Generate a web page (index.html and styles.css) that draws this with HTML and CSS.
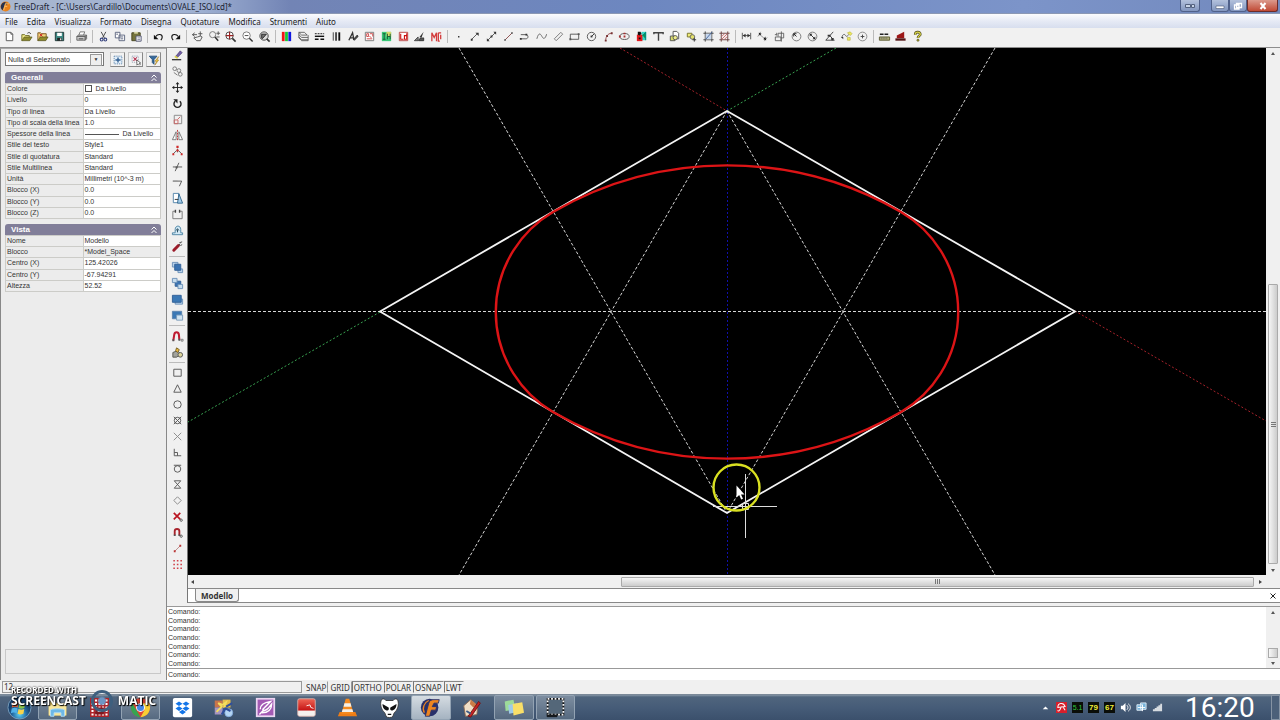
FILE: index.html
```html
<!DOCTYPE html>
<html lang="it">
<head>
    <meta charset="utf-8">
    <title>FreeDraft - OVALE_ISO.lcd</title>
    <link rel="stylesheet" href="styles.css">
</head>
<body>
    <header class="titlebar">
        <svg class="app-icon" viewBox="0 0 12 12"><circle cx="6" cy="6" r="5.5" fill="#e8821c"/><path d="M5 1a5 5 0 0 0-2 9l2-5 4-2z" fill="#25314f"/><path d="M4 10l2-7h4M5 6h3" stroke="#f6b45c" fill="none" stroke-width="1.3"/></svg>
        <h1>FreeDraft - [C:\Users\Cardillo\Documents\OVALE_ISO.lcd]*</h1>
        <div class="window-buttons">
            <button class="win extra" aria-label="Monitor"><svg viewBox="0 0 14 8"><path d="M2.5 2.500h5v3h-5zM8.500 2.500h3v3h-3z" fill="#c8d4e6" stroke="#53617e"/></svg></button>
            <div class="win-group">
                <button class="win" aria-label="Riduci"><svg viewBox="0 0 14 8"><path d="M3 4h8v2.500h-8z" fill="#fff" stroke="#4a5775" stroke-width=".6"/></svg></button>
                <button class="win" aria-label="Ripristina"><svg viewBox="0 0 14 8"><path d="M5.500 1.500h5v4h-5zM3.500 3h4.500v4h-4.500z" fill="#8fa0c0" stroke="#fff" stroke-width="1.3"/></svg></button>
                <button class="win close" aria-label="Chiudi"><svg viewBox="0 0 14 8"><path d="M4.500 1l5 6M9.500 1l-5 6" stroke="#fff" stroke-width="2"/></svg></button>
            </div>
        </div>
    </header>

    <nav class="menu">
        <a href="#">File</a><a href="#">Edita</a><a href="#">Visualizza</a><a href="#">Formato</a><a href="#">Disegna</a><a href="#">Quotature</a><a href="#">Modifica</a><a href="#">Strumenti</a><a href="#">Aiuto</a>
    </nav>

    <div class="toolbar">
        <div class="group n4">
            <button aria-label="Nuovo"><svg viewBox="0 0 14 14"><path d="M3.500 2.500h5l2 2v7h-7zM8.500 2.500v2h2" fill="#fff" stroke="#555"/></svg></button>
            <button aria-label="Apri"><svg viewBox="0 0 14 14"><path d="M2 11.500V5h3l1 1h4v1.500" fill="#f5ee8c" stroke="#6d6b22"/><path d="M2 11.500l2.500-4H13l-2.500 4z" fill="#8f8c2c" stroke="#55531a" stroke-width=".7"/><path d="M8 3.500c2-1.500 3-.5 3.500.8" fill="none" stroke="#333"/></svg></button>
            <button aria-label="Importa"><svg viewBox="0 0 14 14"><path d="M2 11.500V3h3l1 1h5v4" fill="#f3d27c" stroke="#7b5a22"/><path d="M4 4l3 3M7 4L4 7" stroke="#c22"/><path d="M2 11.500l2.500-4H13l-2.500 4z" fill="#8f8c2c" stroke="#4c4917" stroke-width=".7"/></svg></button>
            <button aria-label="Salva"><svg viewBox="0 0 14 14"><path d="M2.500 2.500h9v9h-9z" fill="#3d8a84" stroke="#1e3434"/><path d="M4.500 3h5v3.500h-5z" fill="#fff"/><path d="M4.500 8.500h5v3h-5z" fill="#222"/><path d="M7.500 9h1.500v2h-1.500z" fill="#ddd"/></svg></button>
        </div>
        <div class="group n1">
            <button aria-label="Stampa"><svg viewBox="0 0 14 14"><path d="M4 6l1.500-4h5L9 6" fill="#fff" stroke="#777"/><path d="M2 7l1.500-1.500h9L11 7zM2 7h9v4H2zM11 7l1.500-1.500v4L11 11z" fill="#ccc" stroke="#666"/><path d="M4 9.500h5" stroke="#444"/></svg></button>
        </div>
        <div class="group n3">
            <button aria-label="Taglia"><svg viewBox="0 0 14 14"><path d="M4.500 2l3.500 6.500M9.500 2L6 8.500" stroke="#444" fill="none"/><g fill="none" stroke="#39457f" stroke-width="1.2"><circle cx="5" cy="10.300" r="1.500"/><circle cx="9" cy="10.300" r="1.500"/></g></svg></button>
            <button aria-label="Copia"><svg viewBox="0 0 14 14"><path d="M2.500 2.500h5v6h-5zM6.500 5.500h6v6h-6z" fill="#fff" stroke="#5c647d"/><path d="M3.500 4.500h2M8 7.500h3M8 9.500h3" stroke="#5c647d"/></svg></button>
            <button aria-label="Incolla"><svg viewBox="0 0 14 14"><path d="M2 3h9v8.500H2z" fill="#76753c" stroke="#45441f"/><path d="M4.500 2h4v2h-4z" fill="#d8d7a5"/><path d="M6.500 6.500h5.500v5.500H6.500z" fill="#fff" stroke="#555a77"/><path d="M8 8.500h3M8 10.300h3" stroke="#555a77" stroke-width=".7"/></svg></button>
        </div>
        <div class="group n2">
            <button aria-label="Annulla"><svg viewBox="0 0 14 14"><path d="M4 7C6 4 11 4 11 7.500c0 1.500-.7 2.500-1.500 3.500" fill="none" stroke="#111" stroke-width="1.2"/><path d="M2 5v5h5z" fill="#111"/></svg></button>
            <button aria-label="Ripeti"><svg viewBox="0 0 14 14"><path d="M10 7C8 4 3 4 3 7.500c0 1.500.7 2.500 1.500 3.500" fill="none" stroke="#111" stroke-width="1.2"/><path d="M12 5v5H7z" fill="#111"/></svg></button>
        </div>
        <div class="group n5">
            <button aria-label="Panoramica"><svg viewBox="0 0 14 14"><path d="M1.500 5h5M4 3l-2.500 2L4 7M3 8.500l3 3h4l2-4-2-1-3 1zM10 1.500v5M7.800 4h4.500" fill="none" stroke="#555"/></svg></button>
            <button aria-label="Zoom"><svg viewBox="0 0 14 14"><circle cx="5" cy="5" r="3.300" fill="none" stroke="#777"/><path d="M7.500 7.500l3.500 4" stroke="#333" stroke-width="1.6"/><path d="M11 1.500v4M9 3.500h4M9 7.500h3.500" stroke="#555"/></svg></button>
            <button aria-label="Zoom avanti"><svg viewBox="0 0 14 14"><circle cx="6" cy="6" r="4" fill="#fff" stroke="#444"/><path d="M9 9l3.500 3.500" stroke="#333" stroke-width="1.7"/><path d="M2 6h8M6 2v8" stroke="#922" stroke-width="1.2"/></svg></button>
            <button aria-label="Zoom indietro"><svg viewBox="0 0 14 14"><circle cx="6" cy="6" r="4" fill="#fff" stroke="#777"/><path d="M9 9l3.500 3.500" stroke="#333" stroke-width="1.5"/><path d="M4 6h4" stroke="#444"/></svg></button>
            <button aria-label="Zoom estensione"><svg viewBox="0 0 14 14"><circle cx="6.500" cy="6.500" r="4.500" fill="#ddd" stroke="#444"/><path d="M9.500 9.500l3 3" stroke="#333" stroke-width="1.7"/><path d="M4 9V4.500h5L4.500 9.500" fill="#777" stroke="#222"/></svg></button>
        </div>
        <div class="group n10">
            <button aria-label="Colore"><svg viewBox="0 0 14 14"><path d="M2 2h3v10H2z" fill="#f01515"/><path d="M5.500 2h3v10h-3z" fill="#13c935"/><path d="M9 2h3v10H9z" fill="#1018e0"/></svg></button>
            <button aria-label="Livelli"><svg viewBox="0 0 14 14"><path d="M2 2.500h6l3 3H5zM2 5l3 3h7M2 7.500l3 3h7M2 2.500v6l3 3h7v-6" fill="none" stroke="#555" stroke-width=".9"/></svg></button>
            <button aria-label="Tipo di linea"><svg viewBox="0 0 14 14"><path d="M2 4h10" stroke="#111" stroke-dasharray="2 1"/><path d="M2 6.800h10" stroke="#111" stroke-width="1.5"/><path d="M2 10h10" stroke="#111" stroke-width="1.6" stroke-dasharray="4 2"/></svg></button>
            <button aria-label="Spessore"><svg viewBox="0 0 14 14"><path d="M3.500 2.500v9" stroke="#111" stroke-width=".8"/><path d="M6.500 2.500v9" stroke="#111" stroke-width="1.5"/><path d="M10 2.500v9" stroke="#111" stroke-width="2"/></svg></button>
            <button aria-label="Stile testo"><svg viewBox="0 0 14 14"><path d="M2 11l4-8 1.500 8M3.500 8.500h4" fill="none" stroke="#333" stroke-width="1.4"/><path d="M7 10l4-4.500 1 1.500-4 4z" fill="#555" stroke="#111" stroke-width=".7"/></svg></button>
            <button aria-label="Stile quote"><svg viewBox="0 0 14 14"><path d="M2.500 2.500h9v9h-9z" fill="#fff" stroke="#777"/><path d="M4 4h2v3H4zM7.500 4h3v3M4 9.500h6M7 6.500l2 2" fill="none" stroke="#cf4545"/></svg></button>
            <button aria-label="Stile punto"><svg viewBox="0 0 14 14"><path d="M2 2h10v10H2z" fill="#39c878"/><path d="M7 2h5v5H7z" fill="#d9dc6d"/><path d="M3 4h3M4.500 4v6M3 10h3M8 4v6M11 4v6M8 7h3" fill="none" stroke="#185a35"/></svg></button>
            <button aria-label="Layout"><svg viewBox="0 0 14 14"><path d="M2.500 2.500h9v9h-9z" fill="#fff" stroke="#b44"/><path d="M4 4v6h3M8 6h2.500v4H8zM10.500 3.500v3" fill="none" stroke="#c11" stroke-width="1.2"/></svg></button>
            <button aria-label="Pennello"><svg viewBox="0 0 14 14"><path d="M1.500 11.500l4-4v4z" fill="#888" stroke="#444"/><path d="M11.500 2L7 7.500l2 1z" fill="#333"/><path d="M6 11.500h5.500v-3l-4 .5z" fill="#555" stroke="#333"/></svg></button>
            <button aria-label="Multilinea"><svg viewBox="0 0 14 14"><path d="M2 12V3l2.500 5L7 3v9M9 3v9h1.500M9 3h3M11.500 5v5" fill="none" stroke="#d33d3d" stroke-width="1.4"/></svg></button>
        </div>
        <div class="group n17">
            <button aria-label="Punto"><svg viewBox="0 0 14 14"><path d="M6.500 6.500h1.500v1.500h-1.500z" fill="#333"/></svg></button>
            <button aria-label="Raggio"><svg viewBox="0 0 14 14"><path d="M4 10l6-6" stroke="#555"/><path d="M3 9.500h2v2H3zM8 3h3.500v3.500z" fill="#333"/></svg></button>
            <button aria-label="Retta"><svg viewBox="0 0 14 14"><path d="M3 11l8-8" stroke="#555"/><path d="M2 9v3h3zM9 2h3v3zM6 6h2v2H6z" fill="#333"/></svg></button>
            <button aria-label="Linea"><svg viewBox="0 0 14 14"><path d="M3.500 10.500l7-7" stroke="#8b4b4b"/><path d="M2.500 10h1.500v1.500H2.500zM10 2.500h1.500v1.500H10z" fill="#333"/></svg></button>
            <button aria-label="Polilinea"><svg viewBox="0 0 14 14"><path d="M3 5h5.500c3 0 3 4.500 0 4.500H3" fill="none" stroke="#555"/><path d="M2 8.500h2v2H2zM8 4h2v2H8z" fill="#333"/></svg></button>
            <button aria-label="Spline"><svg viewBox="0 0 14 14"><path d="M2 9.500C4 2 6 4 7.500 7s3.500 3 5-2.500" fill="none" stroke="#666"/></svg></button>
            <button aria-label="Doppia linea"><svg viewBox="0 0 14 14"><path d="M2.500 9.500l7-7 2 2-7 7z" fill="none" stroke="#777"/></svg></button>
            <button aria-label="Rettangolo"><svg viewBox="0 0 14 14"><path d="M2.500 4.500h9v5.500h-9z" fill="none" stroke="#555"/><path d="M1.500 9h2v2h-2zM10.500 3.500h2v2h-2z" fill="#555"/></svg></button>
            <button aria-label="Cerchio"><svg viewBox="0 0 14 14"><circle cx="7" cy="7" r="4.500" fill="none" stroke="#555"/><path d="M7 7l3-3" stroke="#333"/><path d="M6 6h2v2H6z" fill="#333"/></svg></button>
            <button aria-label="Arco"><svg viewBox="0 0 14 14"><path d="M4 11.500C4 7 6 4 10 3.500" fill="none" stroke="#974c4c"/><path d="M3 10.500h2v2H3zM9.500 2.500h2v2h-2zM4.500 5.500h2v2h-2z" fill="#733"/></svg></button>
            <button aria-label="Ellisse"><svg viewBox="0 0 14 14"><ellipse cx="7" cy="7" rx="5" ry="3.200" fill="none" stroke="#555"/><path d="M6 6h2v2H6zM1 6h2v2H1zM6 3h2v1.500H6z" fill="#a33"/></svg></button>
            <button aria-label="Immagine"><svg viewBox="0 0 14 14"><path d="M7 2h5v9H7z" fill="#35d5c4"/><path d="M2 5h6v7H2z" fill="#e3191c"/><path d="M3 2h3l1 2-2 2-2-1zM4 8h2v2H4z" fill="#111"/><path d="M11.500 2v9M8 6l3-3v6" stroke="#087" fill="#0b9a55"/></svg></button>
            <button aria-label="Testo"><svg viewBox="0 0 14 14"><path d="M2 4.500V3h10v1.500M7 3v8.500" fill="none" stroke="#444" stroke-width="1.500"/></svg></button>
            <button aria-label="Blocco"><svg viewBox="0 0 14 14"><path d="M5.500 1.500h4l2 2v6h-6z" fill="#fff" stroke="#555"/><path d="M2.500 6.500h5v5h-5z" fill="#d8dc6b" stroke="#555"/><circle cx="7.800" cy="8.300" r="2.300" fill="#f0ed8a" stroke="#555"/></svg></button>
            <button aria-label="Inserisci blocco"><svg viewBox="0 0 14 14"><path d="M2.500 3.500h5v4h-5z" fill="#f0ed77" stroke="#77732c"/><circle cx="8" cy="7.500" r="2.500" fill="#e5e16b" stroke="#666"/><path d="M8 10.500h4M10 8.500v4" stroke="#333"/></svg></button>
            <button aria-label="Regione"><svg viewBox="0 0 14 14"><path d="M3.500 1.500v11M1.500 3.500h11M10.500 1.500v11M1.500 10.500h11" stroke="#444"/><path d="M4 4h6v6H4z" fill="#c8d8ee"/><path d="M4 10l7-8" stroke="#44649a"/></svg></button>
            <button aria-label="Tratteggio"><svg viewBox="0 0 14 14"><path d="M3.500 1.500v11M1.500 3.500h11M10.500 1.500v11M1.500 10.500h11" stroke="#6a4040"/><path d="M4 7l3-3M4 10l6-6M7 10l3-3" stroke="#c66"/></svg></button>
        </div>
        <div class="group n8">
            <button aria-label="Quota lineare"><svg viewBox="0 0 14 14"><path d="M2.500 3v7M11.500 3v7M3 6h8" stroke="#555"/><path d="M3 6l3-2v4zM11 6L8 4v4z" fill="#333"/></svg></button>
            <button aria-label="Quota allineata"><svg viewBox="0 0 14 14"><path d="M3 4l7 6M2 7l3-5M9 12l3-4" stroke="#777" stroke-width=".8"/><path d="M3 3l3 1-2 2zM11 11l-3-1 2-3z" fill="#111"/></svg></button>
            <button aria-label="Quota ordinata"><svg viewBox="0 0 14 14"><path d="M2.500 7.500h6v4h-6zM5.500 7V3.500h6v5H9M2 5h2M4 3v3M9 1.500v11" fill="none" stroke="#555" stroke-width=".9"/></svg></button>
            <button aria-label="Raggio quota"><svg viewBox="0 0 14 14"><circle cx="7" cy="7" r="4.700" fill="none" stroke="#777"/><path d="M7 7L4 4M4 4v3M4 4h3" stroke="#222"/></svg></button>
            <button aria-label="Diametro"><svg viewBox="0 0 14 14"><circle cx="7" cy="7" r="4.700" fill="none" stroke="#777"/><path d="M4 4l6 6" stroke="#333"/><path d="M4 4h3L4 7zM10 10H7l3-3z" fill="#222"/></svg></button>
            <button aria-label="Quota angolare"><svg viewBox="0 0 14 14"><path d="M11 2L3 11h9.500" fill="none" stroke="#444"/><path d="M6 6c2 0 4 2 4 5" fill="none" stroke="#333"/><path d="M5 5h3v2H5zM9 8.500h2.500V11H9z" fill="#333"/></svg></button>
            <button aria-label="Direttrice"><svg viewBox="0 0 14 14"><path d="M2 8c1-4 3-4 4-2s3 0 4-2" fill="none" stroke="#666"/><path d="M1 7.500h2.500V10z" fill="#333"/><path d="M8 3l3-1 2 2-2 2zM8 8h3v3H8z" fill="#ece95c" stroke="#b1a935" stroke-width=".6"/></svg></button>
            <button aria-label="Centro"><svg viewBox="0 0 14 14"><circle cx="7" cy="7" r="4.700" fill="none" stroke="#888"/><path d="M5 7h4M7 5v4" stroke="#444"/></svg></button>
        </div>
        <div class="group n3">
            <button aria-label="Distanza"><svg viewBox="0 0 14 14"><path d="M2 4.500h10" stroke="#222" stroke-width="1.5" stroke-dasharray="4 1"/><path d="M1.500 7.500h11v3.500h-11z" fill="#b2b17b" stroke="#5c5b33"/><path d="M3.500 8v2M5.500 8v2M7.500 8v2M9.500 8v2" stroke="#555" stroke-width=".7"/></svg></button>
            <button aria-label="Area"><svg viewBox="0 0 14 14"><path d="M3 9V6l8-4v7z" fill="#9c1717"/><path d="M1.500 9h11v2.500h-11z" fill="#551616"/></svg></button>
            <button aria-label="Aiuto"><svg viewBox="0 0 14 14"><path d="M4.500 5c0-3.500 5.500-3.500 5.500-.5C10 6.500 7.500 6 7.500 8.500" fill="none" stroke="#4a4718" stroke-width="2.8"/><path d="M4.500 5c0-3.500 5.500-3.500 5.500-.5C10 6.500 7.500 6 7.500 8.500" fill="none" stroke="#d8d34b" stroke-width="1.4"/><circle cx="7.500" cy="11" r="1.200" fill="#a9a331" stroke="#4a4718" stroke-width=".6"/></svg></button>
        </div>
    </div>

    <main class="workspace">
        <aside class="properties">
            <div class="picker">
                <div class="select-box">
                    <select aria-label="Selezione"><option>Nulla di Selezionato</option></select>
                </div>
                <button aria-label="Seleziona tutto"><svg viewBox="0 0 14 14"><path d="M2.500 2.500h9v9h-9z" fill="#e3effa" stroke="#5680a8" stroke-dasharray="1.5 1"/><path d="M7 4v6M4 7h6" stroke="#315f91" stroke-width="1.6"/></svg></button>
                <button aria-label="Deseleziona"><svg viewBox="0 0 14 14"><path d="M2.500 2.500h7v7h-7z" fill="#fff" stroke="#8a95a8" stroke-dasharray="1.5 1"/><path d="M4 4l4 4M8 4L4 8" stroke="#b33653" stroke-width="1.3"/><path d="M8 7v6l1.500-1.500L11 13l1-1-1.200-1.500H12.500z" fill="#fff" stroke="#444" stroke-width=".8"/></svg></button>
                <button aria-label="Filtro"><svg viewBox="0 0 14 14"><path d="M1.500 2.500h9L7 6.500V12L5 10V6.500z" fill="#346a9e" stroke="#264e78"/><path d="M12.500 3L8 8.500h2L8 13l4.500-6h-2z" fill="#f6cb3d" stroke="#9b7622" stroke-width=".6"/></svg></button>
            </div>

            <section class="panel">
                <h2>Generali <svg viewBox="0 0 8 8"><path d="M1.500 3.500L4 1l2.500 2.500M1.500 7L4 4.500 6.500 7" fill="none" stroke="#fff"/></svg></h2>
                <table class="general">
                    <tr><th>Colore</th><td><span class="swatch"></span>Da Livello</td></tr>
                    <tr><th>Livello</th><td>0</td></tr>
                    <tr><th>Tipo di linea</th><td>Da Livello</td></tr>
                    <tr><th>Tipo di scala della linea</th><td>1.0</td></tr>
                    <tr><th>Spessore della linea</th><td><span class="line-sample"></span>Da Livello</td></tr>
                    <tr><th>Stile del testo</th><td>Style1</td></tr>
                    <tr><th>Stile di quotatura</th><td>Standard</td></tr>
                    <tr><th>Stile Multilinea</th><td>Standard</td></tr>
                    <tr><th>Unità</th><td>Millimetri (10^-3 m)</td></tr>
                    <tr><th>Blocco (X)</th><td>0.0</td></tr>
                    <tr><th>Blocco (Y)</th><td>0.0</td></tr>
                    <tr><th>Blocco (Z)</th><td>0.0</td></tr>
                </table>
            </section>

            <section class="panel">
                <h2>Vista <svg viewBox="0 0 8 8"><path d="M1.500 3.500L4 1l2.500 2.500M1.500 7L4 4.500 6.500 7" fill="none" stroke="#fff"/></svg></h2>
                <table class="view">
                    <tr><th>Nome</th><td>Modello</td></tr>
                    <tr><th>Blocco</th><td class="locked">*Model_Space</td></tr>
                    <tr><th>Centro (X)</th><td>125.42026</td></tr>
                    <tr><th>Centro (Y)</th><td>-67.94291</td></tr>
                    <tr><th>Altezza</th><td>52.52</td></tr>
                </table>
            </section>
            <div class="hint"></div>
        </aside>

        <div class="editor">
            <div class="upper">
                <div class="side-tools">
                    <div class="vgroup edit">
                        <button aria-label="Cancella"><svg viewBox="0 0 14 14"><path d="M5 8l5-6 2 2-5 5z" fill="#7460a8" stroke="#3f3567" stroke-width=".7"/><path d="M3.500 8.500L5 7l3 2.500-1.500 1z" fill="#d9d04f"/><path d="M1 11.500h10" stroke="#333" stroke-width="1.4"/></svg></button>
                        <button aria-label="Copia oggetti"><svg viewBox="0 0 14 14"><g fill="none" stroke="#777"><circle cx="4" cy="4" r="2"/><circle cx="8.500" cy="6" r="2"/><circle cx="10" cy="10" r="2"/><path d="M3 8l4 3"/></g></svg></button>
                        <button aria-label="Sposta"><svg viewBox="0 0 14 14"><path d="M7 3v8M3 7h8" stroke="#222"/><path d="M7 1l2 2.500H5zM7 13l2-2.500H5zM1 7l2.500-2v4zM13 7l-2.500-2v4z" fill="#222"/></svg></button>
                        <button aria-label="Ruota"><svg viewBox="0 0 14 14"><path d="M4.500 4.500a3.800 3.800 0 1 0 5 0" fill="none" stroke="#222" stroke-width="1.5"/><path d="M2.500 2.500h4.500V7z" fill="#222"/></svg></button>
                        <button aria-label="Scala"><svg viewBox="0 0 14 14"><path d="M3.500 2.500h8v9h-8z" fill="none" stroke="#888"/><path d="M3.500 7.500h4v4h-4zM7 7l3-3" fill="none" stroke="#c66"/></svg></button>
                        <button aria-label="Specchio"><svg viewBox="0 0 14 14"><path d="M5.500 3v8.500h-4zM8.500 3v8.500h4z" fill="#fff" stroke="#777"/><path d="M7 1v12" stroke="#b33" stroke-dasharray="2 1"/></svg></button>
                        <button aria-label="Esplodi"><svg viewBox="0 0 14 14"><path d="M6 7l-4 4M8 7l4 4M7 5v4" stroke="#555" fill="none"/><path d="M5.800 2h2.400v2.400H5.800zM5.800 6h2.400v2H5.800zM1.500 10h2v2h-2zM10.500 10h2v2h-2z" fill="#d22b2b"/></svg></button>
                        <button aria-label="Taglia linea"><svg viewBox="0 0 14 14"><path d="M2 7.500h10M4.500 12l4-9" stroke="#555" fill="none"/><path d="M5 7h2v2H5z" fill="#555"/></svg></button>
                        <button aria-label="Estendi"><svg viewBox="0 0 14 14"><path d="M2 5.500h9.500L9 11" fill="none" stroke="#555"/><path d="M2 5.500h5" stroke="#999"/></svg></button>
                        <button aria-label="Stira"><svg viewBox="0 0 14 14"><path d="M2.500 1.500h6v10h-6z" fill="#fff" stroke="#5384aa"/><path d="M8.500 2l4 10H7z" fill="#a4cdea" stroke="#33688f"/><path d="M4 8h4" stroke="#333"/></svg></button>
                        <button aria-label="Spezza"><svg viewBox="0 0 14 14"><path d="M4.500 3.500H2v8h10v-8H9.500" fill="none" stroke="#777"/><path d="M4 2h1.500v3H4zM8.500 2H10v3H8.500z" fill="#444"/></svg></button>
                        <button aria-label="Offset"><svg viewBox="0 0 14 14"><path d="M1.500 9.500h3V6c0-5 6-5 6 0v3.500h2v2h-11z" fill="#d2e9f6" stroke="#4f86a5"/><path d="M7 9V6M5.500 7L7 5l1.500 2" fill="none" stroke="#245"/></svg></button>
                        <button aria-label="Pennello proprietà"><svg viewBox="0 0 14 14"><path d="M3 11l5-5" stroke="#9d1c2b" stroke-width="3.2" stroke-linecap="round"/><path d="M8 6l2-2M9 3l3-1M10 6l2-1" stroke="#444"/></svg></button>
                    </div>
                    <div class="vgroup order">
                        <button aria-label="Primo piano"><svg viewBox="0 0 14 14"><path d="M1.500 1.500h6v5h-6zM7.500 8.500h5v4h-5z" fill="#b9d2ea" stroke="#6c91b8"/><path d="M4 3.500h6.500V10H4z" fill="#3b73b2" stroke="#315f96"/></svg></button>
                        <button aria-label="Sfondo"><svg viewBox="0 0 14 14"><path d="M4.500 4.500h6V10h-6z" fill="#3b73b2" stroke="#315f96"/><path d="M1.500 1.500h5v4.500h-5zM7.500 8h5v4.500h-5z" fill="#c6dced" stroke="#6c91b8"/></svg></button>
                        <button aria-label="Sopra oggetto"><svg viewBox="0 0 14 14"><path d="M4.500 6.500h8v5.500h-8z" fill="#b9d2ea" stroke="#6c91b8"/><path d="M1.500 2.500h9.500v7.500h-9.500z" fill="#3b78b5" stroke="#315f96"/></svg></button>
                        <button aria-label="Sotto oggetto"><svg viewBox="0 0 14 14"><path d="M1.500 2.500h10v8h-10z" fill="#3b78b5" stroke="#5b83ad"/><path d="M6 6.500h6.500v5.500H6z" fill="#d2e4f1" stroke="#799bba"/></svg></button>
                    </div>
                    <div class="vgroup magnet">
                        <button aria-label="Snap"><svg viewBox="0 0 14 14"><path d="M2.500 11.500L3.500 5c.5-3.500 4.500-3.500 5 0l.5 5.500" fill="none" stroke="#bf1b32" stroke-width="2.2"/><path d="M1.500 11h2M8 10.500h2" stroke="#555" stroke-width="2"/><path d="M11 10h2v2h-2z" fill="none" stroke="#555" stroke-width=".7"/></svg></button>
                        <button aria-label="Opzioni snap"><svg viewBox="0 0 14 14"><path d="M2 7l5-2 4 4-5 3H2z" fill="#a2a39c" stroke="#55564f"/><path d="M6 2l3 2-2 3-2-2z" fill="#e8b641" stroke="#776021"/><circle cx="10" cy="9.500" r="2.500" fill="#ddd599" stroke="#555"/></svg></button>
                    </div>
                    <div class="vgroup snaps">
                        <button aria-label="Fine"><svg viewBox="0 0 14 14"><path d="M3 3.500h8v7.500H3z"/></svg></button>
                        <button aria-label="Medio"><svg viewBox="0 0 14 14"><path d="M7 3l4 8H3z"/></svg></button>
                        <button aria-label="Centro snap"><svg viewBox="0 0 14 14"><circle cx="7" cy="7" r="4"/></svg></button>
                        <button aria-label="Nodo"><svg viewBox="0 0 14 14"><circle cx="7" cy="7" r="3.500"/><path d="M3 3l8 8M11 3l-8 8"/></svg></button>
                        <button aria-label="Intersezione"><svg viewBox="0 0 14 14"><path d="M3 3l8 8M11 3l-8 8" stroke="#888"/></svg></button>
                        <button aria-label="Perpendicolare"><svg viewBox="0 0 14 14"><path d="M3.500 3v7.500H11M3.500 7H7v3.500"/></svg></button>
                        <button aria-label="Tangente"><svg viewBox="0 0 14 14"><circle cx="7" cy="7.500" r="3.500"/><path d="M3 3.500h8"/></svg></button>
                        <button aria-label="Vicino"><svg viewBox="0 0 14 14"><path d="M3.500 3h7l-7 8h7z"/></svg></button>
                        <button aria-label="Quadrante"><svg viewBox="0 0 14 14"><path d="M7 3l4 4-4 4-4-4z" stroke="#888"/></svg></button>
                        <button aria-label="Nessuno"><svg viewBox="0 0 14 14"><path d="M3 3l7 7M10 3l-7 7" stroke="#b91521" stroke-width="1.8"/><circle cx="11" cy="11" r="1.200"/></svg></button>
                        <button aria-label="Snap attivo"><svg viewBox="0 0 14 14"><path d="M4 10V5.500c0-3 5-3 5 0V10" stroke="#a8232c" stroke-width="2"/><path d="M3 10h2M8 10h2" stroke-width="1.5"/><circle cx="11" cy="11" r="1.200"/></svg></button>
                        <button aria-label="Da punto"><svg viewBox="0 0 14 14"><path d="M4 10l6-6" stroke="#b88"/><path d="M3 9h2v2H3zM9 3h2v2H9z" fill="#b33" stroke="none"/></svg></button>
                        <button aria-label="Griglia"><svg viewBox="0 0 14 14"><path d="M2.500 3h9.500M2.500 7h9.500M2.500 11h9.500" stroke="#d0414a" stroke-width="1.7" stroke-dasharray="1.700 2.100"/></svg></button>
                    </div>
                </div>

                <div class="drawing">
                    <div class="canvas-row">
                        <svg class="canvas" viewBox="188 48 1078 527" preserveAspectRatio="xMidYMid slice">
                            <!-- axes -->
                            <path class="axis blue" d="M727.500 48V575"/>
                            <path class="axis red" d="M620 48L727 111M1075 311L1266 421"/>
                            <path class="axis green" d="M836 48L727 111M380 312L188 422"/>
                            <!-- construction lines -->
                            <path class="construction" d="M188 311.500H1266M459 48L727 513M995 48L727 513M727 111L459 575M727 111L995 575"/>
                            <!-- rhombus and inscribed oval -->
                            <path class="rhombus" d="M727 111L1075 311.500 727 513 380 311.500z"/>
                            <path class="oval" d="M553 212A348 348 0 0 1 901 212A116 116 0 0 1 901 412A348 348 0 0 1 553 412A116 116 0 0 1 553 212z"/>
                            <!-- crosshair and pointer -->
                            <path class="crosshair" d="M713 506.500H777M745.500 474V538M742.500 503.500h6v6h-6z"/>
                            <circle class="halo" cx="736.500" cy="487.500" r="23"/>
                            <path class="pointer" d="M736.500 485.500v12l2.700-2.500 2 4.500 1.800-.8-2-4.200h3.500z"/>
                        </svg>
                        <div class="vscroll">
                            <i class="up"></i><div class="track"><div class="thumb"></div></div><i class="down"></i>
                        </div>
                    </div>
                    <div class="hscroll">
                        <i class="left"></i><div class="track"><div class="thumb"></div></div><i class="right"></i>
                    </div>
                    <div class="tabs">
                        <button class="tab">Modello</button>
                        <button class="tab-close" aria-label="Chiudi scheda"><svg viewBox="0 0 8 8"><path d="M1.500 1.500l5 5M6.500 1.500l-5 5" stroke="#222"/></svg></button>
                    </div>
                </div>
            </div>

            <div class="console">
                <div class="log">
                    <div class="lines">
                        <div>Comando:</div><div>Comando:</div><div>Comando:</div><div>Comando:</div><div>Comando:</div><div>Comando:</div><div>Comando:</div>
                    </div>
                    <div class="log-scroll"><i class="up"></i><div class="track"><div class="thumb"></div></div><i class="down"></i></div>
                </div>
                <div class="prompt"><label for="command">Comando:</label><input type="text" id="command"></div>
            </div>
        </div>
    </main>

    <div class="status">
        <div class="coords">12</div>
        <button>SNAP</button><button>GRID</button><button class="on">ORTHO</button><button class="on">POLAR</button><button class="on">OSNAP</button><button class="on">LWT</button>
    </div>

    <footer class="taskbar">
        <button class="orb" aria-label="Start"><svg viewBox="0 0 26 26"><defs><radialGradient id="orb" cy=".8"><stop offset="0" stop-color="#5cd0f4"/><stop offset=".6" stop-color="#246ba4"/><stop offset="1" stop-color="#173f6c"/></radialGradient></defs><circle cx="13" cy="13" r="12" fill="url(#orb)" stroke="#769cba"/><path d="M6 8c2-1 4-1 6 0l-1 5c-2-1-4-1-6 0z" fill="#e7683c"/><path d="M13 8.500c2 1 4 1 6 0l-1 5c-2 1-4 1-6 0z" fill="#8bc54b"/><path d="M5 14c2-1 4-1 6 0l-1 5c-2-1-4-1-6 0z" fill="#4fb1e9"/><path d="M12 14.500c2 1 4 1 6 0l-1 5c-2 1-4 1-6 0z" fill="#f7d34b"/></svg></button>
        <div class="apps">
            <button class="open" aria-label="Esplora risorse"><svg viewBox="0 0 24 24"><path d="M2 5h7l2 2h11v14H2z" fill="#e8c95d"/><path d="M2 9h20v12H2z" fill="#f8e69b"/><path d="M4 22v-7c0-2 16-2 16 0v7h-4v-4H8v4z" fill="#6db8e8" stroke="#b5def5"/></svg></button>
            <button aria-label="Cattura schermo"><svg viewBox="0 0 24 24"><path d="M2 2h20v20H2z" fill="#fff"/><path d="M2 2h20v20H2zM2 6h20M2 10h20M2 14h20M2 18h20M6 2v20M10 2v20M14 2v20M18 2v20" fill="none" stroke="#ac2228" stroke-width="1.6"/><path d="M7 12h10v8H7z" fill="#7e1920"/><path d="M10 14h4v3h-4z" fill="#fff"/></svg></button>
            <button class="open" aria-label="Chrome"><svg viewBox="0 0 24 24"><circle cx="12" cy="12" r="11" fill="#e04434"/><path d="M2.500 6.500L12 23A11 11 0 0 1 2.500 6.500z" fill="#35a551"/><path d="M12 23a11 11 0 0 0 9.700-16H12l4.500 8z" fill="#f8cf35"/><circle cx="12" cy="12" r="5" fill="#fff"/><circle cx="12" cy="12" r="4" fill="#4585e8"/></svg></button>
            <button aria-label="Dropbox"><svg viewBox="0 0 24 24"><rect x="1" y="1" width="22" height="22" rx="2" fill="#fff"/><path d="M8 5l4 2.700-4 2.700-4-2.700zM16 5l4 2.700-4 2.700-4-2.700zM8 10.500l4 2.700-4 2.700-4-2.700zM16 10.500l4 2.700-4 2.700-4-2.700zM12 14.500l4 2.700-4 2.700-4-2.700z" fill="#1475e8"/></svg></button>
            <button aria-label="Utilità"><svg viewBox="0 0 24 24"><path d="M2 4h9v8H2z" fill="#c8744b"/><path d="M11 3h9v9h-9z" fill="#e6bd4b"/><path d="M2 12h9v8H2z" fill="#a695c0"/><path d="M4 17l6-6-4-4 5 2 4-3-2 6 4 3" stroke="#f3df5f" stroke-width="2" fill="none"/><circle cx="18" cy="18" r="4.500" fill="#b5d5f3" stroke="#85aee0"/><path d="M10 20l4-7 6 3M15 11l7-4" fill="none" stroke="#2f4f9b" stroke-width="2.5"/></svg></button>
            <button aria-label="Editor"><svg viewBox="0 0 24 24"><rect x="2" y="2" width="20" height="20" fill="#a35ab4" stroke="#ecd6f2" stroke-width="2"/><path d="M6 14c0-5 5-8 12-9L9 14c0 2 3 2 6-1l4-5c0 6-4 10-11 10M5 20l5-5" fill="none" stroke="#fff" stroke-width="1.7"/></svg></button>
            <button aria-label="Reader"><svg viewBox="0 0 24 24"><defs><linearGradient id="reader" x2="0" y2="1"><stop offset="0" stop-color="#ef6655"/><stop offset=".65" stop-color="#c51515"/><stop offset=".7" stop-color="#f5f0ee"/></linearGradient></defs><rect x="2" y="2" width="20" height="20" rx="2" fill="url(#reader)" stroke="#d8b2ab"/><path d="M12 10l4-1 1 3 3 1" fill="none" stroke="#fff"/></svg></button>
            <button aria-label="VLC"><svg viewBox="0 0 24 24"><path d="M3 17h18l2 5H1z" fill="#ee7d16"/><path d="M10 2h4l5 17H5z" fill="#f58b1f"/><path d="M8.500 7h7l1 4h-9zM6.500 14h11l1 3h-13z" fill="#f4f0e8"/></svg></button>
            <button aria-label="Foobar"><svg viewBox="0 0 24 24"><path d="M3 3c2-2 4 0 5 1h8c1-1 3-3 5-1 2 3 1 9-1 12-1 2-3 2-4 7-1 2-7 2-8 0-1-5-3-5-4-7-2-3-3-9-1-12z" fill="#fff" stroke="#333"/><path d="M4 8l7 4c1 3-1 4-3 3-3-1-4-4-4-7zM20 8l-7 4c-1 3 1 4 3 3 3-1 4-4 4-7zM10 19h4v1.500h-4z" fill="#111"/></svg></button>
            <button class="open active" aria-label="FreeDraft"><svg viewBox="0 0 24 24"><circle cx="11" cy="12" r="10" fill="#28306b"/><path d="M6 22l4-15c1-3 3-4 6-4h6l-1 4h-5l-2 4h5l-1 4h-5l-2 7z" fill="#ed8520" stroke="#28306b"/><path d="M5 18c-3-5 0-12 5-14" fill="none" stroke="#ed8520" stroke-width="1.5"/></svg></button>
            <button aria-label="Disegno"><svg viewBox="0 0 24 24"><path d="M2 10l8-7 8 7-1 10-13 2z" fill="#f0dfc7" stroke="#8f6c54"/><path d="M10 3l8 7-5 2-4-4z" fill="#ca7c46"/><path d="M7 22L19 5l2 2L10 23z" fill="#c52323" stroke="#6e1414"/><path d="M5 16l5 3" stroke="#3c5b87" stroke-width="2"/></svg></button>
            <button class="open" aria-label="Note"><svg viewBox="0 0 24 24"><path d="M2 5l10-2 2 11-11 2z" fill="#9ddb9a"/><path d="M6 9l10-2 1 10-10 2z" fill="#9ecbe9"/><path d="M11 8l11-2 2 12-12 3z" fill="#f9df68"/></svg></button>
            <button class="open" aria-label="Registratore"><svg viewBox="0 0 24 24"><path d="M3 2h18v18H3z" fill="#546779" stroke="#111" stroke-width="2"/><path d="M3 2h18v18H3z" fill="none" stroke="#fff" stroke-width="2" stroke-dasharray="2 2"/><path d="M2 20h12v3H2z" fill="#15191d"/></svg></button>
        </div>
        <div class="tray">
            <svg viewBox="0 0 12 12"><path d="M3 8l3-3 3 3z" fill="#fff"/></svg>
            <svg viewBox="0 0 12 12"><path d="M0 0h12v12H0z" fill="#d81f2b"/><path d="M2 6c0-5 6-6 8-1zM6 5L4 9c-1 1-2 1-2 0M8 6l2 3" fill="none" stroke="#fff" stroke-width="1.1"/></svg>
            <span class="meter green">5.1</span>
            <span class="meter">79</span>
            <span class="meter">67</span>
            <svg viewBox="0 0 12 12"><path d="M1 4h2l3-3v10L3 8H1z" fill="#fff"/><path d="M7.500 3.500c1.500 1 1.500 4 0 5M9 2c3 2 3 6 0 8" fill="none" stroke="#fff"/></svg>
            <svg viewBox="0 0 12 12"><path d="M1 3h6v6H1zM5 1h6v7H5z" fill="#79b5dc" stroke="#e0edf7"/><path d="M2 6h8M7 3v7" stroke="#fff"/></svg>
            <svg viewBox="0 0 12 12"><path d="M1 10V8h2v2zM3 10V6.500h2V10zM5 10V5h2v5zM7 10V3.500h2V10zM9 10V2h2v8z" fill="#d6dbe0"/></svg>
        </div>
        <time class="clock">16:20</time>
        <button class="show-desktop" aria-label="Mostra desktop"></button>
    </footer>

    <div class="watermark">
        <div class="small">RECORDED WITH</div>
        <div class="brand">SCREENCAST<span class="ring"></span>MATIC</div>
    </div>
</body>
</html>
```
FILE: styles.css
```css
* {
    box-sizing: border-box;
}
body {
    margin: 0;
    height: 100vh;
    display: flex;
    flex-direction: column;
    overflow: hidden;
    background: #f0f0f0;
    color: #333;
    font-family: "Liberation Sans", Arial, sans-serif;
    font-size: 7px;
}
button {
    margin: 0;
    padding: 0;
    border: none;
    background: none;
    color: inherit;
    font: inherit;
    display: flex;
    align-items: center;
    justify-content: center;
}
h1, h2 {
    margin: 0;
}

/* title bar */
.titlebar {
    flex: none;
    height: 14px;
    display: flex;
    align-items: center;
    padding: 0 0 1px 0;
    background: linear-gradient(90deg, #a9b7cf 0, #9eb0d2 200px, #7284b5 290px, #6d87c0 50%, #7c94c9 80%, #7289bd 100%);
    border-bottom: 1px solid #8b98b4;
}
.app-icon {
    width: 11px;
    height: 11px;
}
.titlebar h1 {
    margin-left: 3px;
    flex: 1;
    font-family: "Noto Sans", sans-serif;
    font-size: 8px;
    font-weight: normal;
    color: #1b2233;
}
.window-buttons {
    display: flex;
    align-self: flex-start;
    gap: 11px;
    padding-right: 2px;
}
.win-group {
    display: flex;
}
.win {
    width: 18px;
    height: 12px;
    border: 1px solid #50618a;
    border-top: none;
    border-radius: 0 0 3px 3px;
    background: linear-gradient(#b3c1dc, #8296bf);
}
.win.extra {
    width: 20px;
}
.win svg {
    width: 14px;
    height: 8px;
}
.win.close {
    width: 31px;
    background: linear-gradient(#dc9a8c, #c04a35);
    border-color: #6d2c2a;
}

/* menu */
.menu {
    flex: none;
    height: 14px;
    display: flex;
    align-items: center;
    gap: 9px;
    padding-left: 5px;
    background: linear-gradient(#fbfcfe, #e6eaf5 50%, #d7deee);
    font-family: "Noto Sans", sans-serif;
    font-size: 8px;
}
.menu a {
    color: #222;
    text-decoration: none;
}

/* top toolbar */
.toolbar {
    flex: none;
    height: 20px;
    display: flex;
    gap: 5px;
    padding: 0 0 2px 1px;
    background: #f1f1f1;
    border-bottom: 1px solid #8d8d8d;
}
.group {
    display: grid;
    grid-auto-flow: column;
    grid-auto-columns: 1fr;
    position: relative;
}
.group + .group::before {
    content: "";
    position: absolute;
    left: -3px;
    top: 2px;
    bottom: 2px;
    border-left: 1px solid #bbb;
}
.n1 { width: 17px; }
.n2 { width: 34px; }
.n3 { width: 50px; }
.n4 { width: 67px; }
.n5 { width: 84px; }
.n8 { width: 133px; }
.n10 { width: 167px; }
.n17 { width: 283px; }
.group svg {
    width: 13px;
    height: 13px;
}

/* workspace */
.workspace {
    flex: 1;
    min-height: 0;
    display: flex;
}
.properties {
    flex: none;
    width: 166px;
    display: flex;
    flex-direction: column;
    padding: 3px 5px 6px 4px;
    border-left: 1px solid #888;
    border-top: 1px solid #aaa;
    background: #ececec;
}
.picker {
    display: flex;
    gap: 3px;
    height: 15px;
    margin-bottom: 5px;
}
.select-box {
    position: relative;
    flex: 1;
    margin-right: 3px;
}
.select-box select {
    appearance: none;
    width: 100%;
    height: 14px;
    padding: 0 2px;
    border: 1px solid #777;
    border-radius: 0;
    background: #fff;
    color: #333;
    font: inherit;
}
.select-box::after {
    content: "▼";
    position: absolute;
    top: 2px;
    right: 2px;
    width: 10px;
    height: 10px;
    background: #eee;
    border: 1px solid #999;
    font-size: 5px;
    line-height: 8px;
    text-align: center;
}
.picker button {
    width: 15px;
    background: #f2f2f2;
    border: 1px solid #c4c4c4;
    border-right-color: #888;
    border-bottom-color: #888;
}
.picker svg {
    width: 12px;
    height: 12px;
}
.panel {
    margin-bottom: 5px;
}
.panel h2 {
    display: flex;
    align-items: center;
    justify-content: space-between;
    height: 11px;
    padding: 0 3px 0 6px;
    background: #817e99;
    color: #fff;
    font-size: 8px;
    border-radius: 3px 3px 0 0;
}
.panel h2 svg {
    width: 8px;
    height: 8px;
}
.panel table {
    width: 100%;
    table-layout: fixed;
    border-collapse: collapse;
    background: #fff;
}
.panel table.general {
    height: 136px;
}
.panel table.view {
    height: 57px;
}
.panel th, .panel td {
    padding: 0 1px;
    border: 1px solid #ccccc8;
    line-height: 8px;
    text-align: left;
    font-weight: normal;
    white-space: nowrap;
}
.panel th, .panel td.locked {
    background: #ececec;
}
.swatch {
    display: inline-block;
    width: 7px;
    height: 7px;
    margin-right: 4px;
    border: 1px solid #555;
    vertical-align: top;
}
.line-sample {
    display: inline-block;
    width: 34px;
    margin-right: 4px;
    border-top: 1px solid #555;
    vertical-align: middle;
}
.hint {
    height: 25px;
    margin-top: auto;
    border: 1px solid #c8c8c8;
}

/* editor area */
.editor {
    flex: 1;
    min-width: 0;
    display: flex;
    flex-direction: column;
    border-left: 1px solid #888;
}
.upper {
    flex: 1;
    min-height: 0;
    display: flex;
    margin-bottom: 3px;
}
.side-tools {
    flex: none;
    width: 20px;
}
.vgroup {
    display: grid;
    grid-auto-rows: 1fr;
    justify-items: center;
    margin-bottom: 5px;
    position: relative;
}
.vgroup + .vgroup::before {
    content: "";
    position: absolute;
    top: -3px;
    left: 2px;
    right: 2px;
    border-top: 1px solid #bbb;
}
.vgroup svg {
    width: 13px;
    height: 13px;
}
.edit { height: 206px; }
.order { height: 64px; }
.magnet { height: 32px; }
.snaps { height: 207px; }
.snaps svg {
    fill: none;
    stroke: #555;
}
.drawing {
    flex: 1;
    min-width: 0;
    display: flex;
    flex-direction: column;
    border-left: 1px solid #777;
    border-bottom: 1px solid #888;
}
.canvas-row {
    flex: 1;
    min-height: 0;
    display: flex;
}
.canvas {
    flex: 1;
    min-width: 0;
    background: #000;
}
.axis {
    fill: none;
    stroke-dasharray: 2 2;
}
.axis.blue { stroke: #1010a8; }
.axis.red { stroke: #a4222a; }
.axis.green { stroke: #38a050; }
.construction {
    fill: none;
    stroke: #d6d6d6;
    stroke-dasharray: 3 2;
}
.rhombus {
    fill: none;
    stroke: #f4f4f4;
    stroke-width: 1.8;
}
.oval {
    fill: none;
    stroke: #dc1416;
    stroke-width: 2.4;
}
.crosshair {
    fill: none;
    stroke: #ddd;
}
.halo {
    fill: none;
    stroke: #d9e021;
    stroke-width: 2.4;
}
.pointer {
    fill: #fff;
}

/* scroll bars */
.vscroll, .log-scroll {
    flex: none;
    width: 14px;
    display: flex;
    flex-direction: column;
    align-items: center;
    padding: 4px 0 3px;
    background: #f0f0f0;
}
.track {
    flex: 1;
    display: flex;
}
.vscroll .track {
    width: 10px;
    align-items: flex-end;
    padding-bottom: 5px;
}
.vscroll .thumb {
    width: 10px;
    height: 55%;
    background: linear-gradient(90deg, #f5f5f5, #ccc);
    border: 1px solid #aaa;
    border-radius: 1px;
}
.up, .down {
    border: 2px solid transparent;
}
.up {
    border-top: none;
    border-bottom: 3px solid #555;
}
.down {
    border-bottom: none;
    border-top: 3px solid #555;
}
.left, .right {
    border: 2px solid transparent;
}
.left {
    border-left: none;
    border-right: 3px solid #444;
}
.right {
    border-right: none;
    border-left: 3px solid #444;
}
.hscroll {
    flex: none;
    height: 13px;
    display: flex;
    align-items: center;
    padding: 0 18px 0 3px;
    background: #f0f0f0;
}
.hscroll .track {
    justify-content: flex-end;
    padding: 0 5px;
}
.hscroll .thumb {
    width: 60%;
    height: 10px;
    background: linear-gradient(#f5f5f5, #ccc);
    border: 1px solid #aaa;
    border-radius: 1px;
}
.vscroll .thumb, .hscroll .thumb {
    display: flex;
    align-items: center;
    justify-content: center;
}
.vscroll .thumb::after, .hscroll .thumb::after {
    content: "";
    width: 5px;
    height: 5px;
    background: repeating-linear-gradient(90deg, #777 0 1px, transparent 1px 2px);
}
.vscroll .thumb::after {
    background: repeating-linear-gradient(#777 0 1px, transparent 1px 2px);
}

/* layout tabs */
.tabs {
    flex: none;
    height: 14px;
    display: flex;
    justify-content: space-between;
    padding: 0 3px 0 7px;
    background: #fff;
    border-top: 1px solid #888;
}
.tab {
    height: 13px;
    width: 44px;
    background: #f0f0f0;
    border: 1px solid #888;
    border-top: none;
    border-radius: 0 0 3px 3px;
    font-family: "Open Sans", sans-serif;
    font-size: 8px;
    font-weight: bold;
}
.tab-close svg {
    width: 8px;
    height: 8px;
}

/* command console */
.console {
    flex: none;
    height: 74px;
    display: flex;
    flex-direction: column;
    background: #fff;
    border-top: 1px solid #999;
}
.log {
    flex: 1;
    display: flex;
    border-bottom: 1px solid #999;
}
.lines {
    flex: 1;
    display: grid;
    grid-auto-rows: 1fr;
    align-items: center;
    padding-left: 1px;
}
.log-scroll .track {
    width: 10px;
    align-items: flex-end;
    padding-bottom: 4px;
}
.log-scroll .thumb {
    width: 10px;
    height: 10px;
    background: linear-gradient(90deg, #f8f8f8, #ccc);
    border: 1px solid #aaa;
}
.prompt {
    flex: none;
    height: 11px;
    display: flex;
    align-items: center;
    padding-left: 1px;
}
.prompt input {
    flex: 1;
    height: 9px;
    padding: 0 2px;
    border: none;
    outline: none;
    font: inherit;
}

/* status bar */
.status {
    flex: none;
    height: 14px;
    display: flex;
    align-items: center;
    padding: 0 2px;
    font-family: "Noto Sans", sans-serif;
    font-size: 8px;
}
.coords {
    width: 300px;
    height: 12px;
    margin-right: 2px;
    padding-left: 1px;
    line-height: 10px;
    border: 1px solid #999;
}
.status button {
    height: 12px;
    padding: 0 1px;
    border: 1px solid #eee;
    border-right-color: #999;
}
.status button.on {
    border-color: #888 #eee #eee #777;
}

/* taskbar */
.taskbar {
    flex: none;
    height: 26px;
    display: flex;
    align-items: center;
    background: linear-gradient(#8796a6 0, #50657d 2px, #465c78 50%, #3b506c 100%);
    border-top: 1px solid #7b8998;
}
.orb {
    width: 38px;
}
.orb svg {
    width: 25px;
    height: 25px;
}
.apps {
    width: 537px;
    height: 100%;
    display: grid;
    grid-template-columns: repeat(13, 1fr);
    gap: 2px;
}
.apps button {
    border: 1px solid transparent;
    border-radius: 2px;
}
.apps button.open {
    border-color: #93a3b3;
    background: linear-gradient(#7d8da0, #566a80);
}
.apps button.active {
    background: linear-gradient(#d5dce2, #a5b3c1);
}
.apps svg {
    width: 21px;
    height: 21px;
}
.tray {
    margin-left: auto;
    display: flex;
    align-items: center;
    gap: 5px;
}
.tray svg, .meter {
    width: 11px;
    height: 11px;
}
.meter {
    background: #0a0d08;
    color: #f2ef3a;
    font-size: 8px;
    font-weight: bold;
    line-height: 11px;
    text-align: center;
}
.meter.green {
    color: #31c93f;
    font-size: 7px;
    font-weight: normal;
}
.clock {
    width: 72px;
    margin-left: 22px;
    color: #fff;
    font-family: Roboto, sans-serif;
    font-size: 28px;
    line-height: 25px;
}
.show-desktop {
    width: 9px;
    height: 100%;
    margin-left: 14px;
    border: 1px solid #8693a3;
    background: #4c6079;
}

/* recorder watermark, floats above the taskbar */
.watermark {
    position: fixed;
    left: 11px;
    bottom: 12px;
    color: #fff;
    font-family: "Open Sans", sans-serif;
    font-weight: bold;
    text-shadow: 0 0 2px #000, 1px 1px 1px #000;
}
.small {
    font-size: 8px;
    line-height: 8px;
}
.brand {
    display: flex;
    align-items: center;
    font-size: 12px;
    line-height: 14px;
}
.ring {
    width: 22px;
    height: 22px;
    margin: -4px 5px;
    border: 3px solid #3e5f7e;
    border-radius: 50%;
    background: radial-gradient(#6d96c4 0 3px, transparent 5px);
}
```
